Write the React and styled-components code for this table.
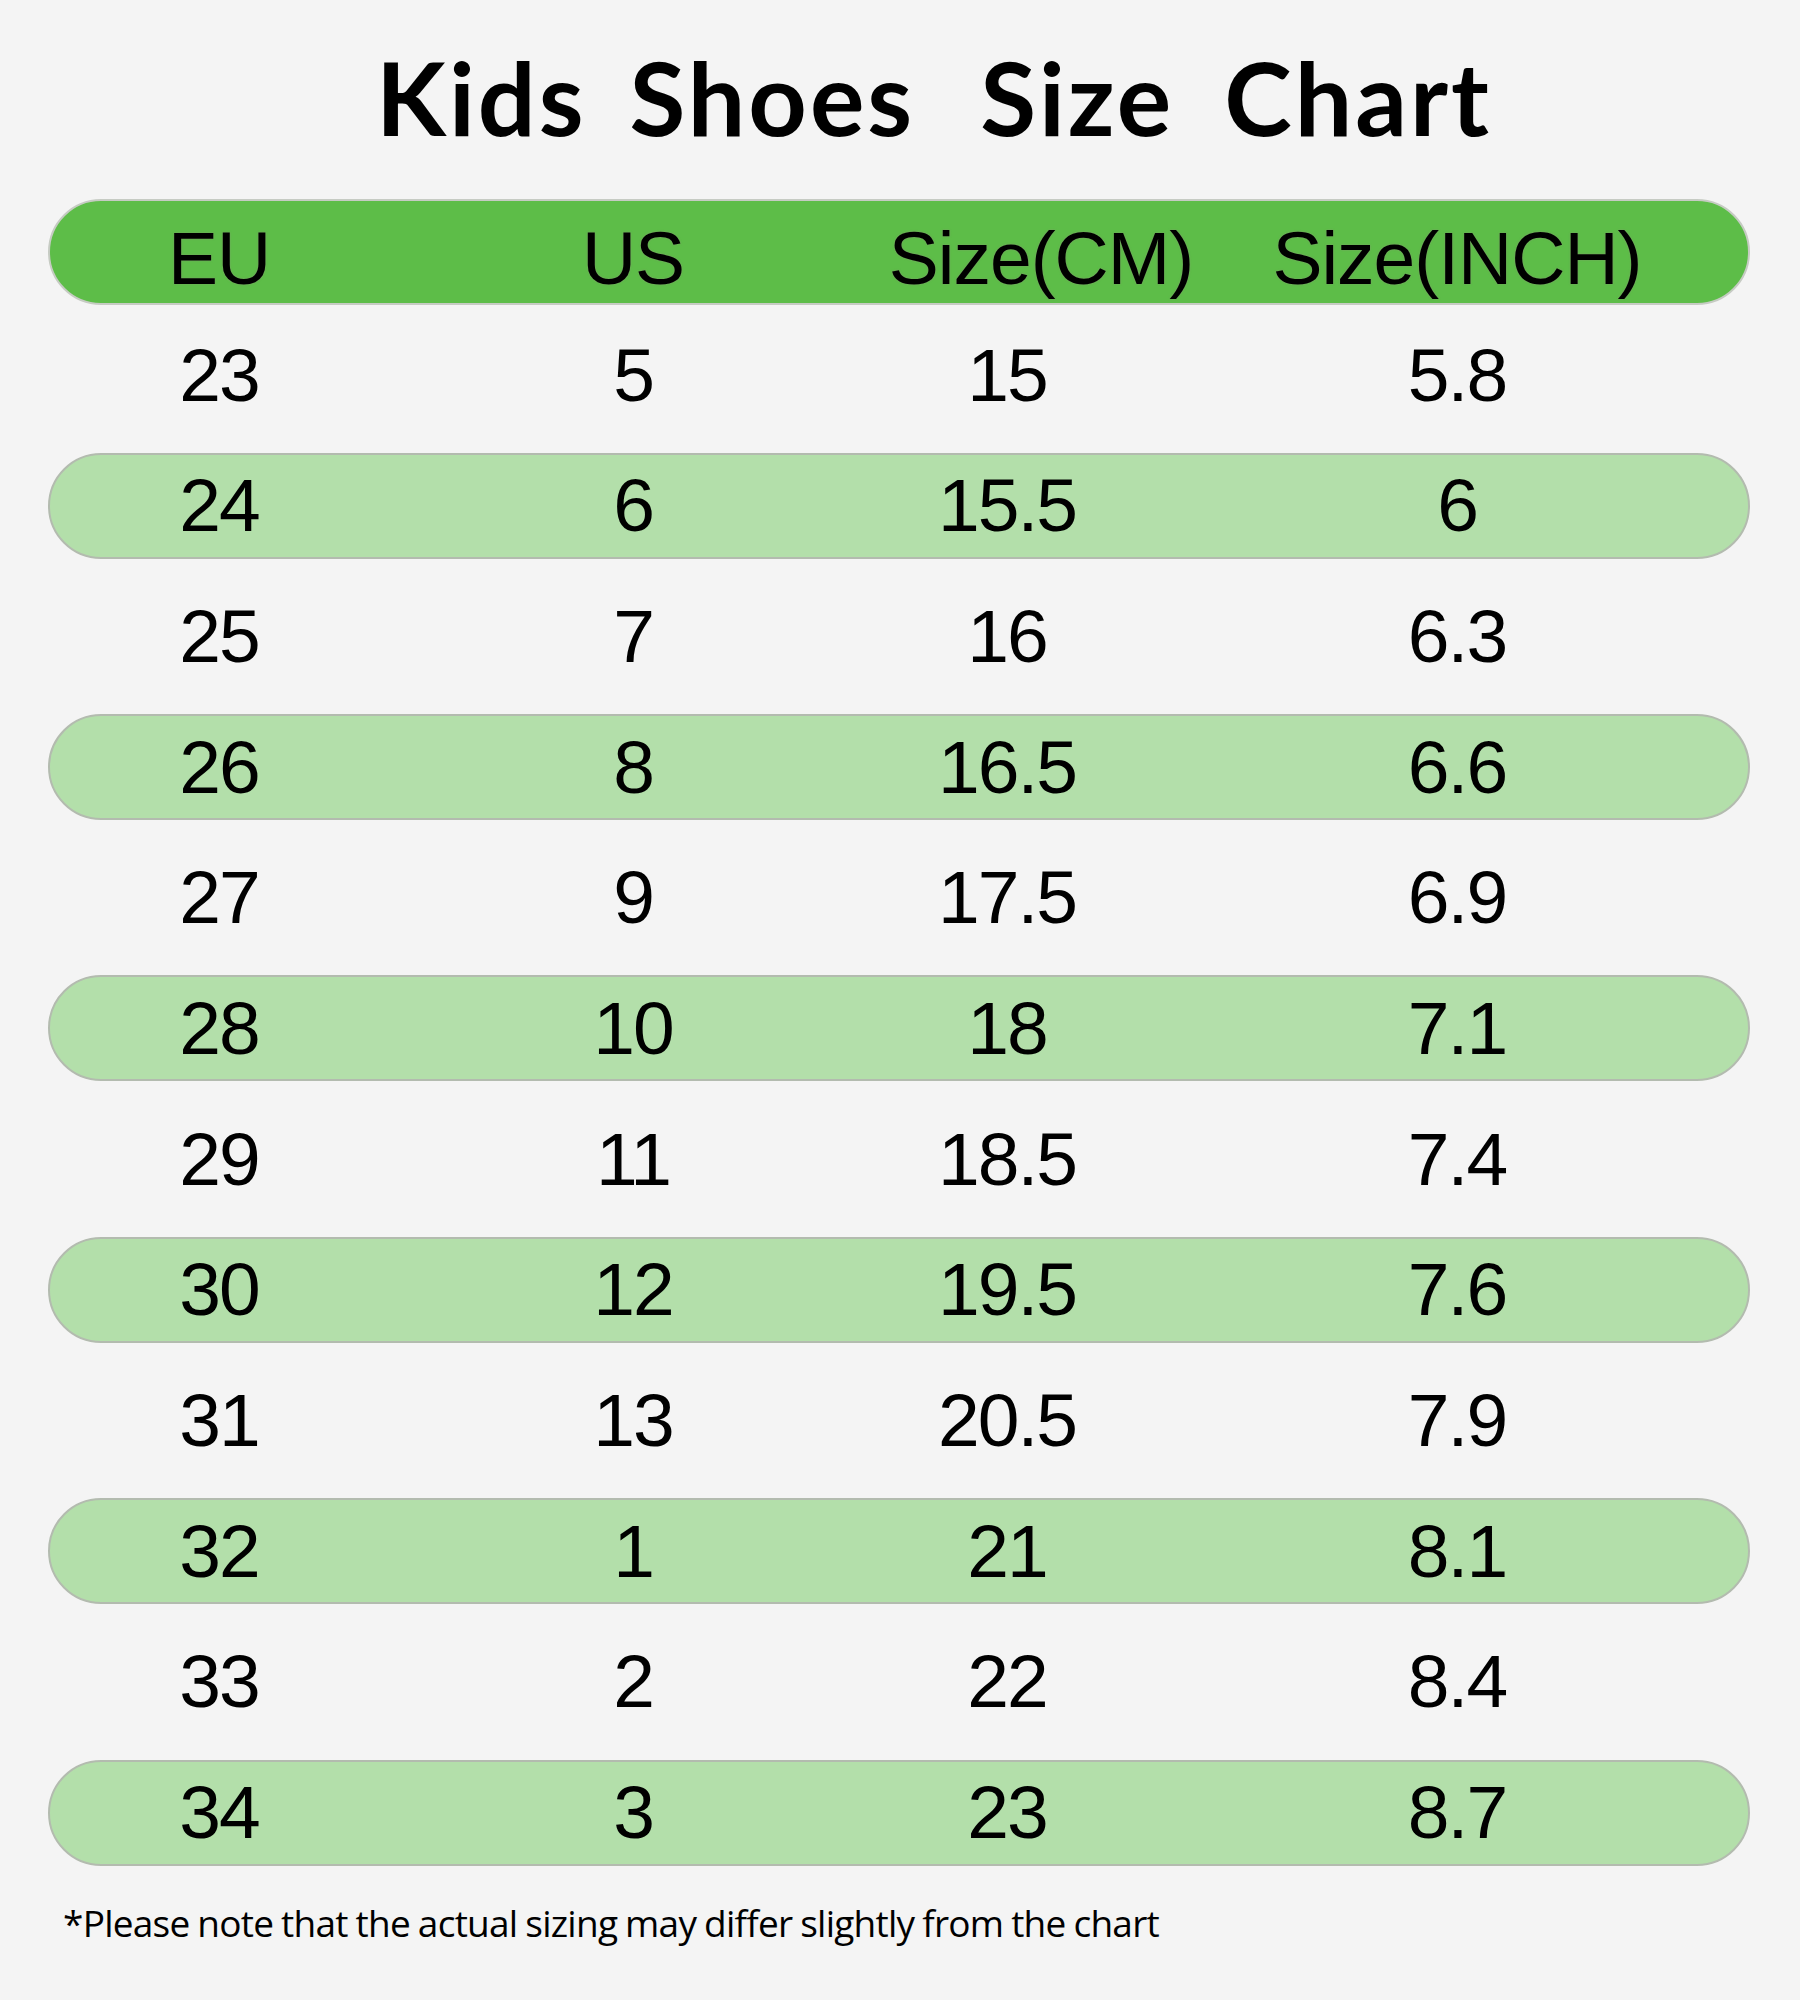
import styled, { createGlobalStyle } from "styled-components";

const GlobalStyle = createGlobalStyle`
  html, body {
    margin: 0;
    padding: 0;
    background: #f4f4f4;
  }
`;

const Page = styled.main`
  width: 1800px;
  height: 2000px;
  box-sizing: border-box;
  padding: 0 50px 0 48px;
  background: #f4f4f4;
  display: flex;
  flex-direction: column;
`;

const Title = styled.h1`
  margin: 0;
  height: 199px;
  padding: 46px 0 0 70px;
  box-sizing: border-box;
  display: flex;
  justify-content: center;
  font-family: "Comic Sans MS", "Lato", sans-serif;
  font-weight: 700;
  font-size: 102px;
  line-height: 1;
  letter-spacing: 3px;
  color: #000;
`;

const Word = styled.span`
  margin-right: ${(p) => p.$gap || 0}px;
`;

const Band = styled.div`
  height: 106px;
  box-sizing: border-box;
  border-radius: 53px;
  display: grid;
  grid-template-columns: 338px 490px 258px 642px;
  align-items: center;
  background: ${(p) => (p.$tone === "header" ? "#5dbd48" : p.$tone === "light" ? "#b3dfaa" : "transparent")};
  border: 2px solid ${(p) => (p.$tone === "header" ? "#c6cbc3" : p.$tone === "light" ? "#b3bbaf" : "transparent")};
`;

const HeaderBand = styled(Band)`
  padding-top: 12px;
`;

const Rows = styled.div`
  margin-top: 17px;
  display: flex;
  flex-direction: column;
  gap: 24.7px;
`;

const Cell = styled.div`
  display: flex;
  justify-content: center;
  white-space: nowrap;
  font-family: "Liberation Sans", Arial, sans-serif;
  font-size: 75px;
  line-height: 1;
  letter-spacing: -2px;
  color: #000;
  transform: translateX(${(p) => p.$nudge || 0}px);
`;

const HeadCell = styled(Cell)`
  letter-spacing: -1px;
  text-shadow: 0 0 2px rgba(140, 140, 120, 0.7);
`;

const Note = styled.p`
  margin: 38px 0 0 15px;
  font-family: "Open Sans", sans-serif;
  font-weight: 500;
  font-size: 37px;
  line-height: 1;
  letter-spacing: -0.75px;
  word-spacing: -1px;
  color: #000;
`;

const data = [
  ["23", "5", "15", "5.8"],
  ["24", "6", "15.5", "6"],
  ["25", "7", "16", "6.3"],
  ["26", "8", "16.5", "6.6"],
  ["27", "9", "17.5", "6.9"],
  ["28", "10", "18", "7.1"],
  ["29", "11", "18.5", "7.4"],
  ["30", "12", "19.5", "7.6"],
  ["31", "13", "20.5", "7.9"],
  ["32", "1", "21", "8.1"],
  ["33", "2", "22", "8.4"],
  ["34", "3", "23", "8.7"],
];

export default function App() {
  return (
    <>
      <GlobalStyle />
      <Page>
        <Title>
          <Word $gap={43}>Kids</Word>
          <Word $gap={65}>Shoes</Word>
          <Word $gap={50}>Size</Word>
          <Word>Chart</Word>
        </Title>
        <HeaderBand $tone="header">
          <HeadCell>EU</HeadCell>
          <HeadCell>US</HeadCell>
          <HeadCell $nudge={34}>Size(CM)</HeadCell>
          <HeadCell>Size(INCH)</HeadCell>
        </HeaderBand>
        <Rows>
          {data.map((row, i) => (
            <Band key={row[0]} $tone={i % 2 ? "light" : "plain"}>
              {row.map((v, j) => (
                <Cell key={j}>{v}</Cell>
              ))}
            </Band>
          ))}
        </Rows>
        <Note>*Please note that the actual sizing may differ slightly from the chart</Note>
      </Page>
    </>
  );
}
